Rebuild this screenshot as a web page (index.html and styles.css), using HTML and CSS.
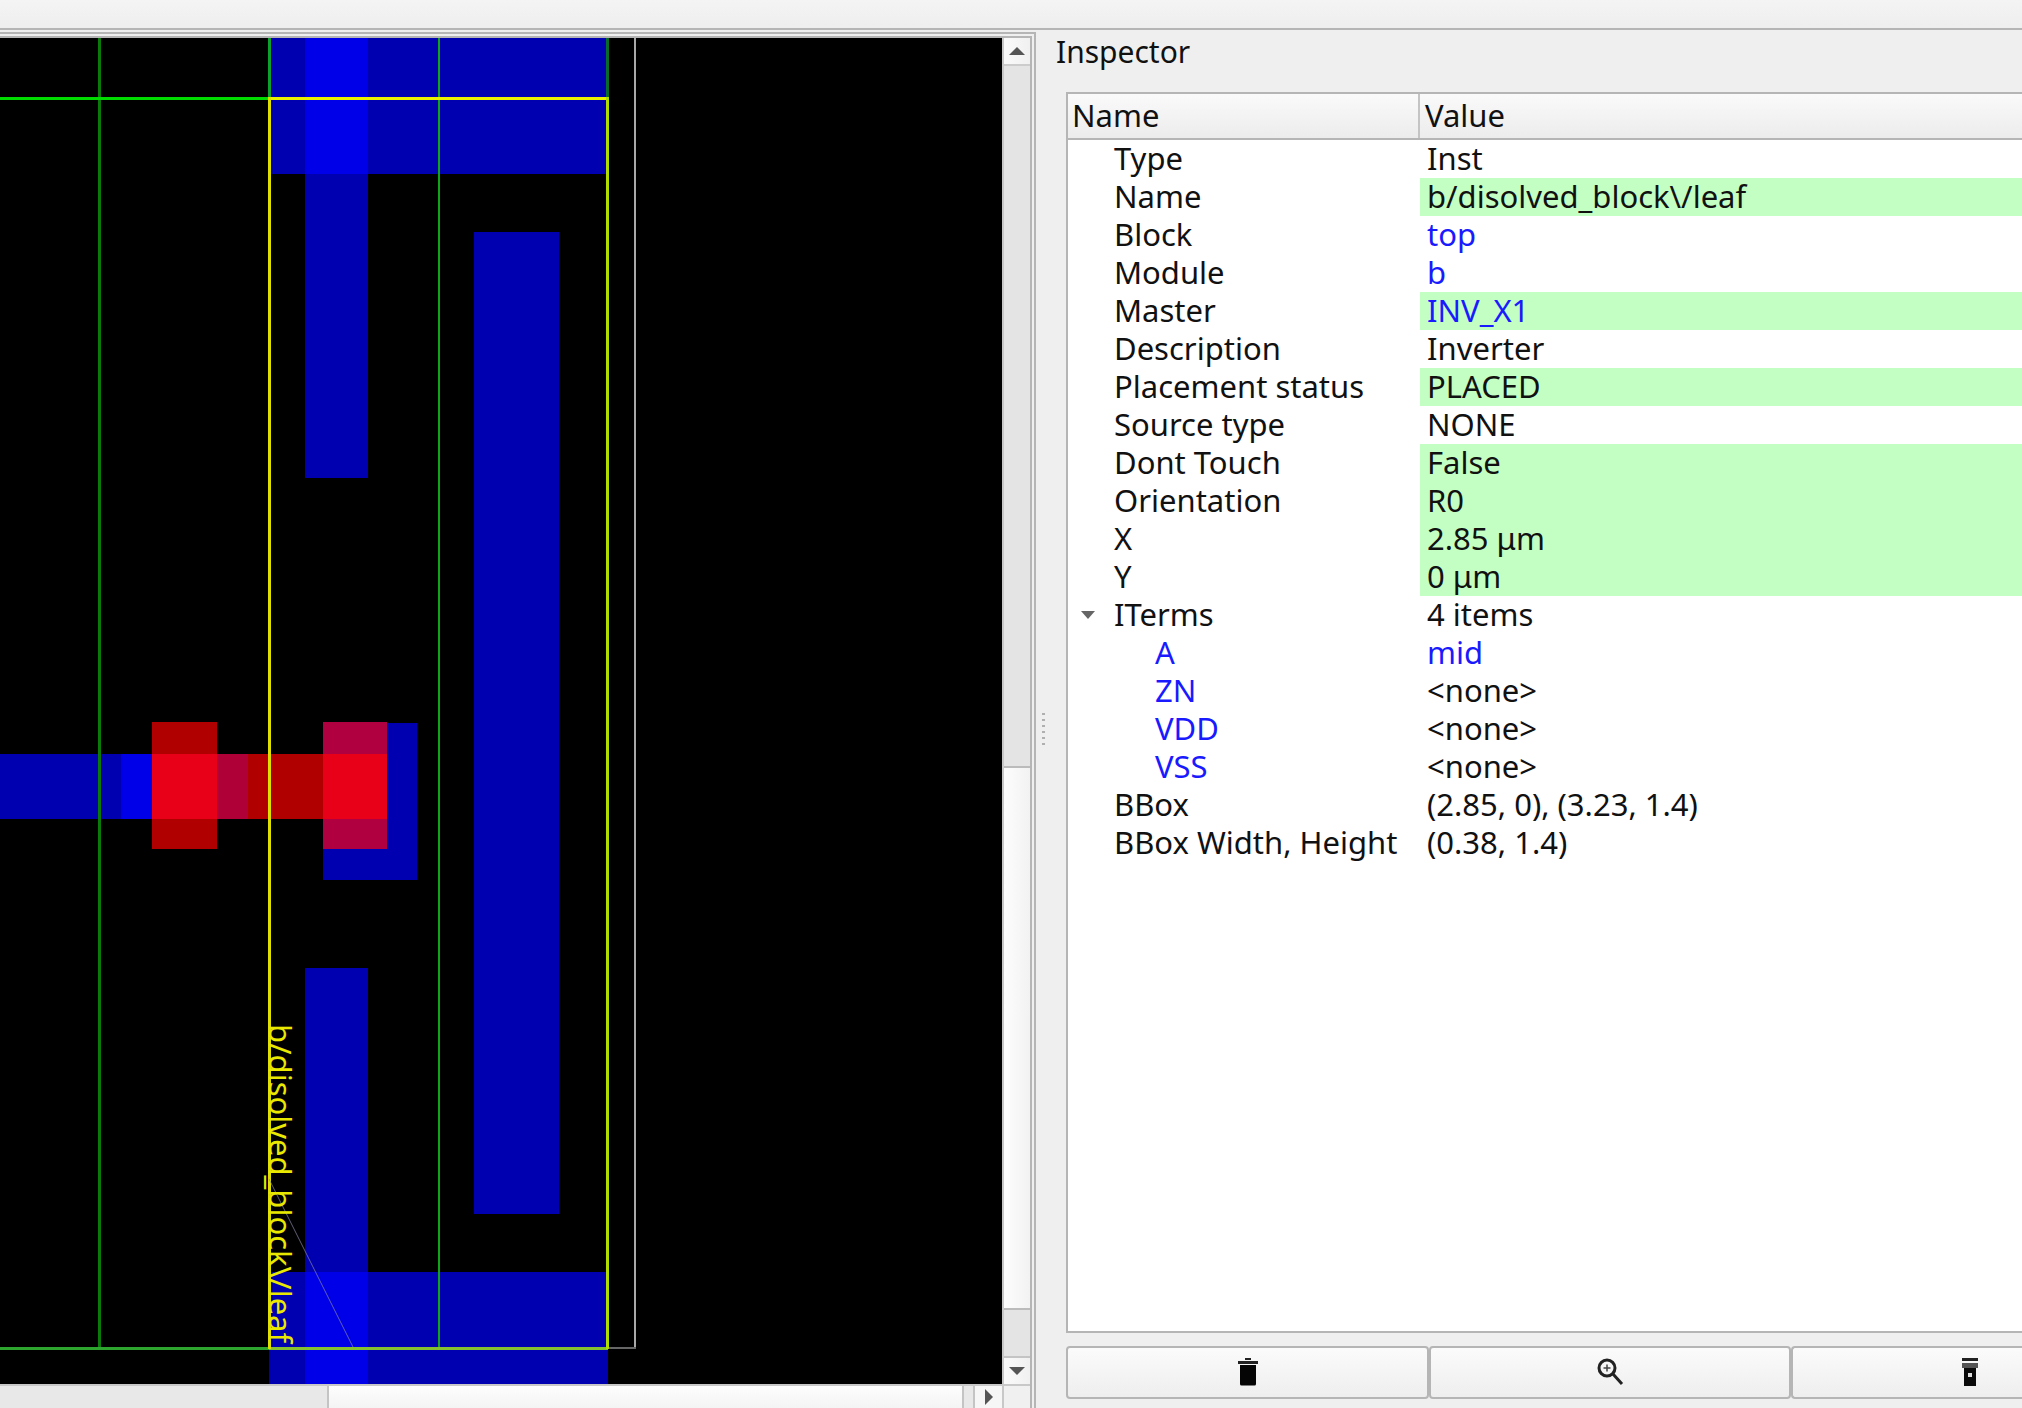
FILE: index.html
```html
<!DOCTYPE html>
<html lang="en">
<head>
    <meta charset="UTF-8">
    <title>Layout viewer</title>
    <link rel="stylesheet" href="styles.css">
</head>
<body>
    <div class="toolbar"></div>
    <div class="main">
        <div class="dock-left">
            <div class="view-frame">
                <svg class="layout" width="1002" height="1346" viewBox="0 38 1002 1346">
                    <defs>
                        <clipPath id="labelClip"><rect x="240" y="1000" width="80" height="347"/></clipPath>
                    </defs>
                    <rect x="0" y="38" width="1002" height="1346" fill="#000"/>
                    <!-- metal -->
                    <rect x="269" y="38" width="339" height="136" fill="#0000b0"/>
                    <rect x="305" y="174" width="63" height="304" fill="#0000b0"/>
                    <rect x="305" y="38" width="63" height="136" fill="#0000e8"/>
                    <rect x="474" y="232" width="85" height="982" fill="#0000b0"/>
                    <rect x="305" y="968" width="63" height="304" fill="#0000b0"/>
                    <rect x="269" y="1272" width="339" height="112" fill="#0000b0"/>
                    <rect x="305" y="1272" width="63" height="112" fill="#0000e8"/>
                    <rect x="0" y="754" width="121" height="65" fill="#0000b0"/>
                    <rect x="121" y="754" width="31" height="65" fill="#0000e8"/>
                    <rect x="386" y="723" width="31" height="157" fill="#0000b0"/>
                    <rect x="323" y="849" width="63" height="31" fill="#0000b0"/>
                    <!-- poly and contacts -->
                    <rect x="152" y="722" width="65" height="127" fill="#b00000"/>
                    <rect x="152" y="754" width="65" height="65" fill="#e80018"/>
                    <rect x="217" y="754" width="31" height="65" fill="#b00038"/>
                    <rect x="248" y="754" width="75" height="65" fill="#b00000"/>
                    <rect x="323" y="722" width="64" height="127" fill="#b00040"/>
                    <rect x="323" y="754" width="64" height="65" fill="#e80018"/>
                    <!-- tracks and cell outline -->
                    <rect x="98" y="38" width="3" height="1310" fill="#0a7a0a"/>
                    <rect x="438" y="38" width="2" height="1310" fill="#10a418"/>
                    <rect x="268" y="38" width="3" height="61" fill="#0ca02c"/>
                    <rect x="606" y="38" width="3" height="61" fill="#0a6a2a"/>
                    <rect x="0" y="97" width="269" height="3" fill="#00dc00"/>
                    <rect x="634" y="38" width="2" height="1311" fill="#a8a8a8"/>
                    <rect x="608" y="1347" width="28" height="2" fill="#666"/>
                    <rect x="0" y="1347" width="269" height="3" fill="#2ea52e"/>
                    <rect x="269" y="1347" width="339" height="3" fill="#84c030"/>
                    <rect x="268" y="97" width="341" height="3" fill="#e8f000"/>
                    <rect x="268" y="97" width="3" height="1252" fill="#e0e000"/>
                    <rect x="606" y="97" width="3" height="1252" fill="#b0dc00"/>
                    <line x1="269" y1="1179" x2="353" y2="1347" class="leader"/>
                    <g clip-path="url(#labelClip)">
                        <text class="inst-label" transform="translate(269 1024) rotate(90)">b/disolved_block\/leaf</text>
                    </g>
                </svg>
                <div class="vscroll">
                    <div class="scroll-btn scroll-btn-up"><span class="arrow arrow-up"></span></div>
                    <div class="vtrack"></div>
                    <div class="vthumb"></div>
                    <div class="vtrack-end"></div>
                    <div class="scroll-btn scroll-btn-down"><span class="arrow arrow-down"></span></div>
                </div>
                <div class="hscroll">
                    <div class="htrack"></div>
                    <div class="hthumb"></div>
                    <div class="htrack-end"></div>
                    <div class="hbtn"><span class="arrow arrow-right"></span></div>
                </div>
                <div class="corner"></div>
            </div>
        </div>
        <div class="splitter"><span class="grip"></span></div>
        <div class="inspector">
            <div class="dock-title">Inspector</div>
            <div class="tree">
                <div class="tree-head">
                    <div class="head-name">Name</div>
                    <div class="head-value">Value</div>
                </div>
                <div class="row"><div class="key">Type</div><div class="val">Inst</div></div>
                <div class="row"><div class="key">Name</div><div class="val edit">b/disolved_block\/leaf</div></div>
                <div class="row"><div class="key">Block</div><div class="val link">top</div></div>
                <div class="row"><div class="key">Module</div><div class="val link">b</div></div>
                <div class="row"><div class="key">Master</div><div class="val edit link">INV_X1</div></div>
                <div class="row"><div class="key">Description</div><div class="val">Inverter</div></div>
                <div class="row"><div class="key">Placement status</div><div class="val edit">PLACED</div></div>
                <div class="row"><div class="key">Source type</div><div class="val">NONE</div></div>
                <div class="row"><div class="key">Dont Touch</div><div class="val edit">False</div></div>
                <div class="row"><div class="key">Orientation</div><div class="val edit">R0</div></div>
                <div class="row"><div class="key">X</div><div class="val edit">2.85 μm</div></div>
                <div class="row"><div class="key">Y</div><div class="val edit">0 μm</div></div>
                <div class="row"><div class="key"><span class="twisty"></span>ITerms</div><div class="val">4 items</div></div>
                <div class="row"><div class="key child link">A</div><div class="val link">mid</div></div>
                <div class="row"><div class="key child link">ZN</div><div class="val">&lt;none&gt;</div></div>
                <div class="row"><div class="key child link">VDD</div><div class="val">&lt;none&gt;</div></div>
                <div class="row"><div class="key child link">VSS</div><div class="val">&lt;none&gt;</div></div>
                <div class="row"><div class="key">BBox</div><div class="val">(2.85, 0), (3.23, 1.4)</div></div>
                <div class="row"><div class="key">BBox Width, Height</div><div class="val">(0.38, 1.4)</div></div>
            </div>
            <div class="actions">
                <button class="action action-first">
                    <svg class="icon" width="20" height="28" viewBox="0 0 20 28"><path d="M7 0h6v2H7zM0 3h20v3H0z" fill="#222"/><path d="M2 7h16v19a1.500 1.500 0 0 1-1.500 1.500h-13A1.500 1.500 0 0 1 2 26z" fill="#050505"/></svg>
                </button>
                <button class="action">
                    <svg class="icon" width="28" height="30" viewBox="0 0 28 30"><circle cx="11" cy="11" r="8" fill="none" stroke="#222" stroke-width="3"/><path d="M17 17l9 10" stroke="#222" stroke-width="3"/><path d="M11 7.500v7M7.500 11h7" stroke="#444" stroke-width="1.500"/></svg>
                </button>
                <button class="action action-clipped">
                    <svg class="icon" width="16" height="28" viewBox="0 0 16 28"><path d="M0 0h16v3H0z" fill="#222"/><path d="M0 5h16v5H0z" fill="#555"/><path d="M2 10h12v18H2z" fill="#0a0a0a"/><rect x="6" y="15" width="4" height="4" fill="#ddd"/></svg>
                </button>
            </div>
        </div>
    </div>
</body>
</html>
```

FILE: styles.css
```css
* {
    box-sizing: border-box;
}

html, body {
    margin: 0;
    height: 100%;
    overflow: hidden;
}

body {
    display: flex;
    flex-direction: column;
    background-color: #efefef;
    font-family: "Noto Sans", "Open Sans", sans-serif;
    font-size: 31px;
    color: #111;
}

.toolbar {
    height: 30px;
    flex: none;
    border-bottom: 2px solid #b5b5b5;
    background: linear-gradient(#f4f4f4, #eee);
}

.main {
    flex: 1;
    display: flex;
    min-height: 0;
}

.dock-left {
    width: 1036px;
    flex: none;
    margin-top: 2px;
    padding: 2px 2px 0 0;
    border-top: 2px solid #b5b5b5;
    border-right: 2px solid #b5b5b5;
}

.view-frame {
    display: grid;
    grid-template-columns: 1002px 28px;
    grid-template-rows: 1346px 24px;
    width: 1032px;
    border-top: 2px solid #b5b5b5;
    border-right: 2px solid #b5b5b5;
}

.layout {
    display: block;
}

.leader {
    stroke: #8888a8;
    stroke-width: 1;
    opacity: 0.7;
}

.inst-label {
    fill: #e8e800;
    font-family: "Noto Sans", sans-serif;
    font-size: 31px;
}

/* scrollbars */
.vscroll {
    display: flex;
    flex-direction: column;
    border-left: 2px solid #c8c8c8;
    background-color: #e4e4e4;
}

.scroll-btn {
    height: 28px;
    flex: none;
    display: flex;
    align-items: center;
    justify-content: center;
    background: linear-gradient(to right, #fafafa, #f0f0f0);
}

.scroll-btn-up {
    border-bottom: 2px solid #ccc;
}

.scroll-btn-down {
    border-top: 2px solid #c4c4c4;
}

.vtrack {
    flex: 1;
}

.vthumb {
    height: 544px;
    flex: none;
    border-top: 2px solid #bbb;
    border-bottom: 2px solid #bbb;
    background: linear-gradient(to right, #fdfdfd, #f2f2f2);
}

.vtrack-end {
    height: 46px;
    flex: none;
}

.hscroll {
    display: flex;
    border-top: 2px solid #c8c8c8;
    background-color: #e8e8e8;
}

.htrack {
    width: 329px;
    border-right: 2px solid #c4c4c4;
}

.hthumb {
    width: 633px;
    background: linear-gradient(#fdfdfd, #f4f4f4);
}

.htrack-end {
    width: 13px;
    border-left: 2px solid #c4c4c4;
    border-right: 2px solid #c4c4c4;
}

.hbtn {
    flex: 1;
    display: flex;
    align-items: center;
    justify-content: center;
    background-color: #f6f6f6;
}

.corner {
    border-top: 2px solid #c8c8c8;
    border-left: 2px solid #c8c8c8;
    background-color: #f0f0f0;
}

.arrow {
    display: block;
    width: 0;
    height: 0;
    border-style: solid;
    border-color: transparent;
}

.arrow-up {
    border-width: 0 8px 8px;
    border-bottom-color: #555;
}

.arrow-down {
    border-width: 8px 8px 0;
    border-top-color: #555;
}

.arrow-right {
    border-width: 8px 0 8px 8px;
    border-left-color: #555;
}

/* splitter */
.splitter {
    width: 16px;
    flex: none;
    display: flex;
    align-items: center;
    justify-content: center;
    padding: 20px 2px 0 0;
}

.grip {
    width: 3px;
    height: 33px;
    background: repeating-linear-gradient(#b0b0b0 0 2px, transparent 2px 6px);
}

/* inspector */
.inspector {
    flex: 1;
    display: flex;
    flex-direction: column;
    min-width: 0;
    padding: 0 0 9px 14px;
}

.dock-title {
    height: 62px;
    flex: none;
    margin-left: -10px;
    padding-top: 3px;
    font-size: 30px;
    line-height: 38px;
}

.tree {
    flex: 1;
    min-height: 0;
    border: 2px solid #b5b5b5;
    border-right: none;
    background-color: #fff;
}

.tree-head {
    display: flex;
    height: 46px;
    border-bottom: 2px solid #b5b5b5;
    background: linear-gradient(#fafafa, #ececec);
    line-height: 43px;
}

.head-name {
    width: 352px;
    padding-left: 4px;
    border-right: 2px solid #c4c4c4;
}

.head-value {
    padding-left: 5px;
}

.row {
    display: flex;
    height: 38px;
    line-height: 36px;
}

.key {
    position: relative;
    width: 352px;
    flex: none;
    padding-left: 46px;
    white-space: nowrap;
}

.key.child {
    padding-left: 87px;
}

.val {
    flex: 1;
    padding-left: 7px;
    white-space: nowrap;
}

.val.edit {
    background-color: #c3ffc3;
}

.link {
    color: #1a1aff;
}

.twisty {
    position: absolute;
    left: 13px;
    top: 15px;
    border-style: solid;
    border-width: 8px 7px 0;
    border-color: #666 transparent transparent;
}

.actions {
    display: flex;
    height: 53px;
    flex: none;
    margin-top: 13px;
}

.action {
    width: 362px;
    flex: none;
    display: flex;
    align-items: center;
    justify-content: center;
    padding: 0;
    border: 2px solid #b5b5b5;
    border-radius: 4px;
    background: linear-gradient(#fbfbfb, #eee);
}

.action-first {
    width: 363px;
}

.action-clipped {
    width: 231px;
    padding-left: 125px;
    border-right: none;
    border-radius: 4px 0 0 4px;
}

.icon {
    display: block;
    margin-bottom: 2px;
}
```
